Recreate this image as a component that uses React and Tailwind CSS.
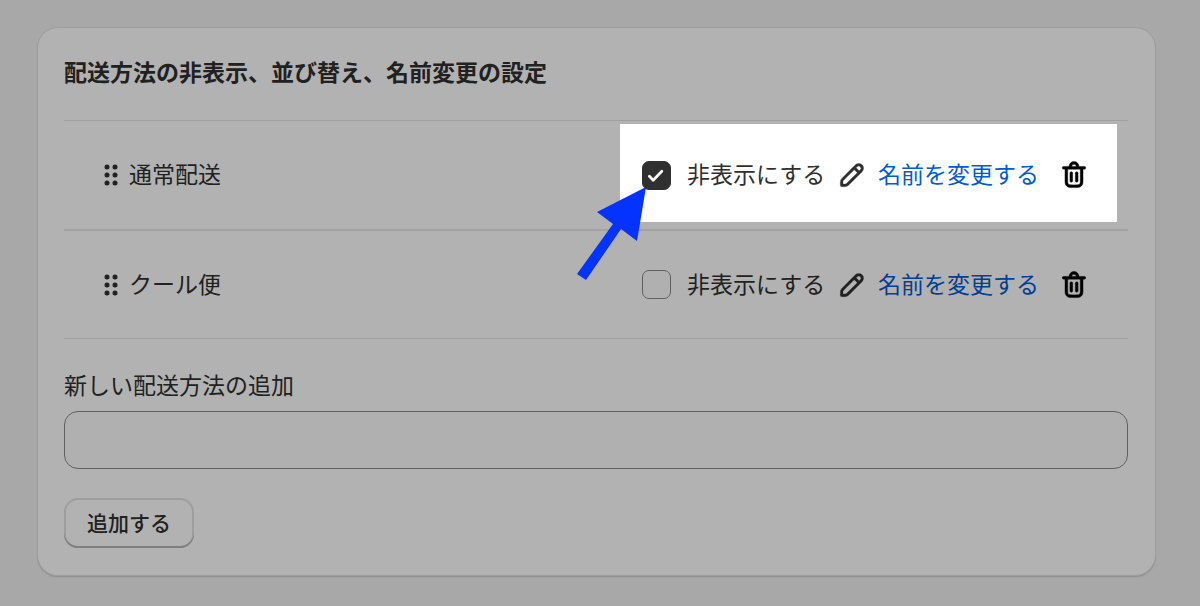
import { useState } from "react";

const initialMethods = [
  { id: "standard", name: "通常配送", hidden: true },
  { id: "cool", name: "クール便", hidden: false },
];

function DragIcon() {
  return (
    <svg width="14" height="22" viewBox="0 0 14 22" fill="#303030">
      {[3, 11, 19].map((y) => (
        <g key={y}>
          <circle cx="3" cy={y} r="2.5"/>
          <circle cx="11" cy={y} r="2.5"/>
        </g>
      ))}
    </svg>
  );
}

function PencilIcon() {
  return (
    <svg width="36" height="36" viewBox="0 0 20 20" fill="#303030" stroke="#303030" strokeWidth="0.15" className="shrink-0">
      <path fillRule="evenodd" d="M15.655 4.344a2.695 2.695 0 0 0-3.81 0l-.599.599-.009-.009-1.06 1.06.008.01-5.88 5.88a2.75 2.75 0 0 0-.805 1.944v1.922a.75.75 0 0 0 .75.75h1.922a2.75 2.75 0 0 0 1.944-.806l7.54-7.539a2.695 2.695 0 0 0 0-3.81Zm-4.409 2.72-5.88 5.88a1.25 1.25 0 0 0-.366.884v1.172h1.172c.331 0 .65-.132.883-.366l5.88-5.88-1.689-1.69Zm2.75.629.599-.599a1.195 1.195 0 1 0-1.69-1.689l-.598.599 1.69 1.689Z"/>
    </svg>
  );
}

function TrashIcon() {
  return (
    <svg width="36" height="36" viewBox="0 0 20 20" fill="#000" stroke="#000" strokeWidth="0.25">
      <path d="M11.5 8.25a.75.75 0 0 1 .75.75v4.25a.75.75 0 0 1-1.5 0v-4.25a.75.75 0 0 1 .75-.75Z"/>
      <path d="M9.25 9a.75.75 0 0 0-1.5 0v4.25a.75.75 0 0 0 1.5 0v-4.25Z"/>
      <path fillRule="evenodd" d="M7.25 5.25a2.75 2.75 0 0 1 5.5 0h3a.75.75 0 0 1 0 1.5h-.75v5.45c0 1.68 0 2.52-.327 3.162a3 3 0 0 1-1.311 1.311c-.642.327-1.482.327-3.162.327h-.4c-1.68 0-2.52 0-3.162-.327a3 3 0 0 1-1.311-1.311c-.327-.642-.327-1.482-.327-3.162v-5.45h-.75a.75.75 0 0 1 0-1.5h3Zm1.5 0a1.25 1.25 0 1 1 2.5 0h-2.5Zm-2.25 1.5h7v5.45c0 .865-.001 1.423-.036 1.848-.033.41-.09.559-.128.633a1.5 1.5 0 0 1-.655.655c-.074.038-.223.095-.633.128-.425.035-.983.036-1.848.036h-.4c-.865 0-1.423-.001-1.848-.036-.41-.033-.559-.09-.633-.128a1.5 1.5 0 0 1-.656-.655c-.037-.074-.094-.223-.127-.633-.035-.425-.036-.983-.036-1.848v-5.45Z"/>
    </svg>
  );
}

// Dims the whole page except the cell it sits in
function Spotlight() {
  return (
    <>
      <div className="pointer-events-none absolute inset-x-0 top-[3px] bottom-[7px] z-10 shadow-[0_0_0_2000px_rgba(0,0,0,0.3)]"/>
      <svg
        width="69" height="93" viewBox="0 0 69 93"
        className="pointer-events-none absolute top-[66px] -left-[43px] z-20"
      >
        <path d="M69 0 20 25 36 37 0 87 9 93 44 42 60 54Z" fill="#0433ff"/>
      </svg>
    </>
  );
}

function MethodRow({ method, highlighted, onToggle, onDelete }) {
  const checkId = `hide-${method.id}`;

  return (
    <li className="box-content flex h-[108px] items-center last:h-[107px]">
      <button type="button" aria-label="並び替え" className="ml-10 cursor-grab">
        <DragIcon/>
      </button>
      <span className="ml-[11px] flex-1 pb-1">{method.name}</span>

      <div className="relative mr-[11px] flex h-full w-[497px] items-center pl-[22px]">
        <span className="relative h-[29px] w-[29px] shrink-0">
          <input
            id={checkId}
            type="checkbox"
            checked={method.hidden}
            onChange={() => onToggle(method.id)}
            className="peer block h-[29px] w-[29px] appearance-none rounded-[7px] border border-[#8a8a8a] bg-[#fdfdfd] checked:border-[#303030] checked:bg-[#303030]"
          />
          <svg
            width="29" height="29" viewBox="0 0 29 29" fill="none"
            stroke="#fff" strokeWidth="2.7" strokeLinecap="round" strokeLinejoin="round"
            className="pointer-events-none absolute inset-0 hidden peer-checked:block"
          >
            <path d="M7.4 15.2 11.2 19.2 19.8 10.2"/>
          </svg>
        </span>
        <label htmlFor={checkId} className="ml-4 w-[140px] pb-1">非表示にする</label>
        <a href="#rename" className="ml-[7px] flex items-center gap-2 text-[#005bd3]">
          <PencilIcon/>
          <span className="w-[162px] pb-1">名前を変更する</span>
        </a>
        <button type="button" aria-label="削除" onClick={() => onDelete(method.id)} className="ml-4">
          <TrashIcon/>
        </button>
        {highlighted && <Spotlight/>}
      </div>
    </li>
  );
}

export default function App() {
  const [methods, setMethods] = useState(initialMethods);
  const [newName, setNewName] = useState("");

  const handleToggle = (id) =>
    setMethods((prev) => prev.map((m) => (m.id === id ? { ...m, hidden: !m.hidden } : m)));

  const handleDelete = (id) => setMethods((prev) => prev.filter((m) => m.id !== id));

  const handleAdd = (e) => {
    e.preventDefault();
    if (!newName.trim()) return;
    setMethods((prev) => [...prev, { id: String(Date.now()), name: newName, hidden: false }]);
    setNewName("");
  };

  return (
    <div className="min-h-screen overflow-hidden bg-[#f1f1f1] pt-7 pr-[45px] pb-[30px] pl-[38px] font-['Noto_Sans_CJK_JP',sans-serif] text-[23px] leading-[30px] text-[#303030]">
      <section className="rounded-[20px] bg-white pt-7 pr-[27px] pb-[27px] pl-[26px] shadow-[0_0_0_1px_#e0e0e0,0_1px_0_1px_#d2d2d2,0_2px_1px_1px_#e6e6e6]">
        <h2 className="font-bold">配送方法の非表示、並び替え、名前変更の設定</h2>

        <ul className="mt-[34px] divide-y-2 divide-[#e8e8e8] border-y border-[#e5e5e5]">
          {methods.map((m) => (
            <MethodRow
              key={m.id}
              method={m}
              highlighted={m.id === "standard"}
              onToggle={handleToggle}
              onDelete={handleDelete}
            />
          ))}
        </ul>

        <form onSubmit={handleAdd} className="pt-[30px]">
          <label htmlFor="new-method" className="block">新しい配送方法の追加</label>
          <input
            id="new-method"
            type="text"
            value={newName}
            onChange={(e) => setNewName(e.target.value)}
            className="mt-3 block h-[58px] w-full rounded-[14px] border border-[#8a8a8a] bg-[#fdfdfd] px-5"
          />
          <button
            type="submit"
            className="mt-[29px] block h-[50px] w-[130px] rounded-[14px] bg-white pb-0.5 text-[21px] font-medium shadow-[inset_0_-2px_0_#b5b5b5,inset_0_0_0_2px_#e3e3e3]"
          >
            追加する
          </button>
        </form>
      </section>
    </div>
  );
}
